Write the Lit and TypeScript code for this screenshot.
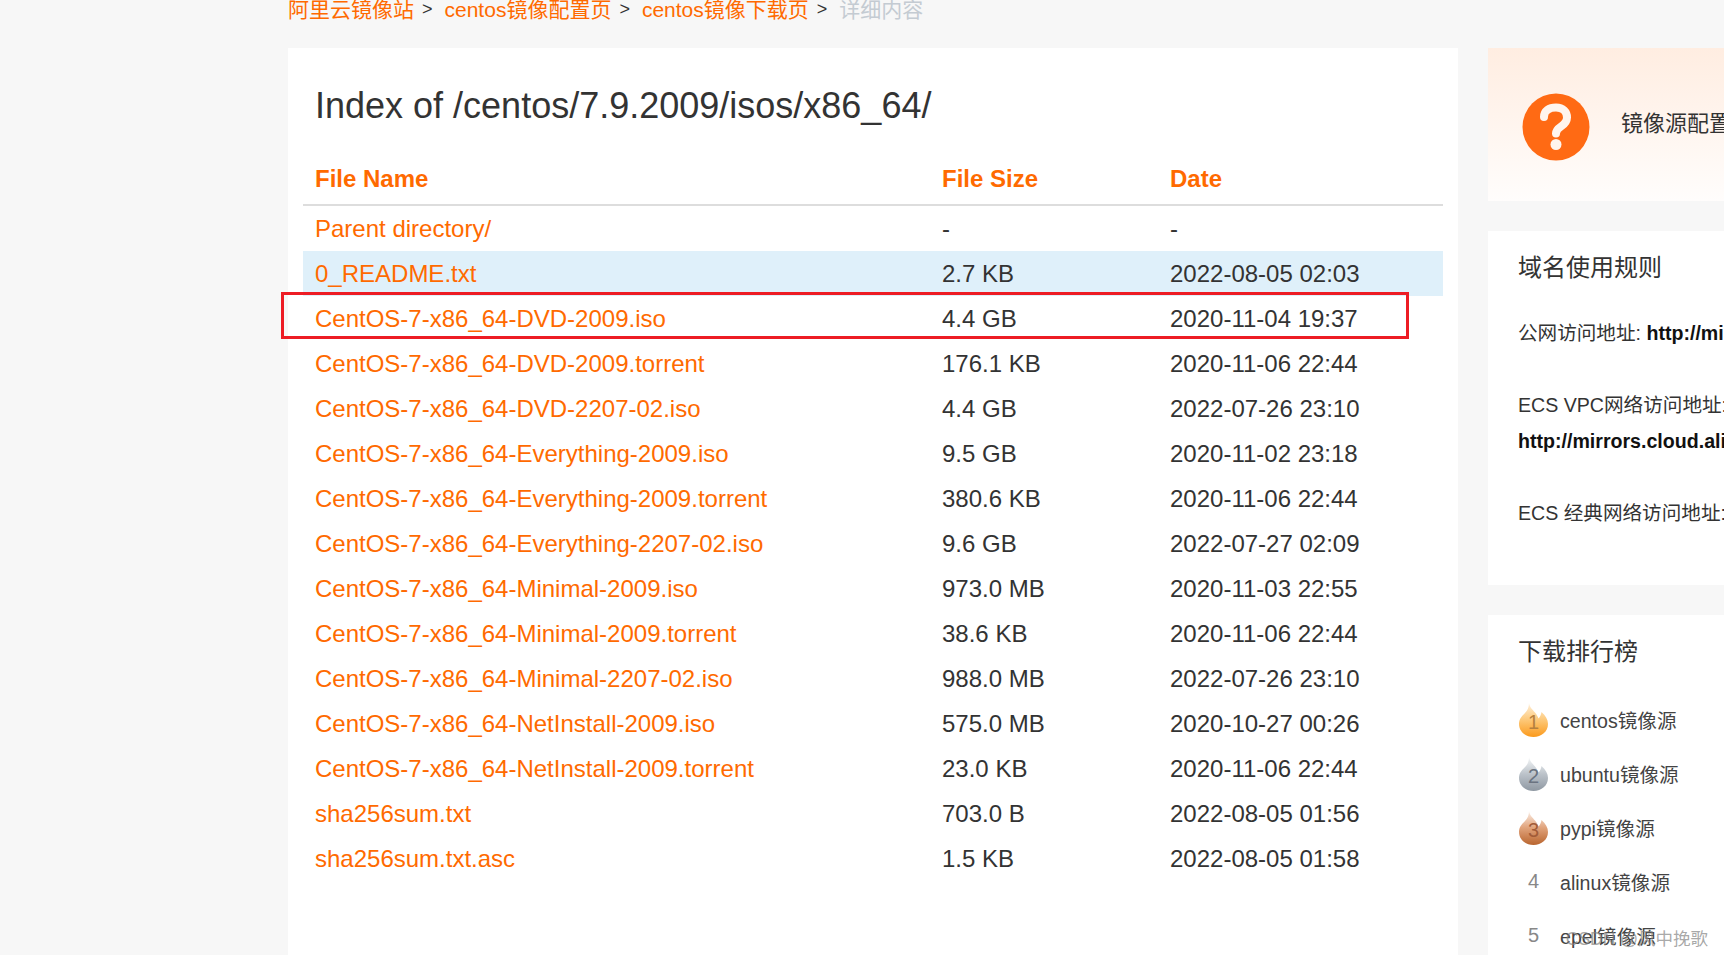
import { LitElement, html, css, svg } from "lit";
import { customElement } from "lit/decorators.js";

const FILES: [string, string, string][] = [
  ["Parent directory/", "-", "-"],
  ["0_README.txt", "2.7 KB", "2022-08-05 02:03"],
  ["CentOS-7-x86_64-DVD-2009.iso", "4.4 GB", "2020-11-04 19:37"],
  ["CentOS-7-x86_64-DVD-2009.torrent", "176.1 KB", "2020-11-06 22:44"],
  ["CentOS-7-x86_64-DVD-2207-02.iso", "4.4 GB", "2022-07-26 23:10"],
  ["CentOS-7-x86_64-Everything-2009.iso", "9.5 GB", "2020-11-02 23:18"],
  ["CentOS-7-x86_64-Everything-2009.torrent", "380.6 KB", "2020-11-06 22:44"],
  ["CentOS-7-x86_64-Everything-2207-02.iso", "9.6 GB", "2022-07-27 02:09"],
  ["CentOS-7-x86_64-Minimal-2009.iso", "973.0 MB", "2020-11-03 22:55"],
  ["CentOS-7-x86_64-Minimal-2009.torrent", "38.6 KB", "2020-11-06 22:44"],
  ["CentOS-7-x86_64-Minimal-2207-02.iso", "988.0 MB", "2022-07-26 23:10"],
  ["CentOS-7-x86_64-NetInstall-2009.iso", "575.0 MB", "2020-10-27 00:26"],
  ["CentOS-7-x86_64-NetInstall-2009.torrent", "23.0 KB", "2020-11-06 22:44"],
  ["sha256sum.txt", "703.0 B", "2022-08-05 01:56"],
  ["sha256sum.txt.asc", "1.5 KB", "2022-08-05 01:58"],
];

const RANKS = ["centos镜像源", "ubuntu镜像源", "pypi镜像源", "alinux镜像源", "epel镜像源"];
const FLAME = [
  ["#fff1dc", "#fdc878", "#fb9a1c"],
  ["#f6f8f9", "#bcc3ca", "#8f98a2"],
  ["#fcefe6", "#e0a27a", "#b9652f"],
];

function flame(i: number) {
  const [a, m, b] = FLAME[i];
  return svg`<svg class="flame" viewBox="0 0 29 34" width="29" height="34">
    <defs><linearGradient id="fl${i}" x1="0" y1="0" x2="0" y2="1">
      <stop offset="0" stop-color=${a}></stop><stop offset="0.5" stop-color=${m}></stop><stop offset="1" stop-color=${b}></stop>
    </linearGradient></defs>
    <path fill="url(#fl${i})" d="M10 0C10.500 4 13.500 6.500 16 9.500 18 12 19 14 19.500 15.500 21 14 22 12 22.500 9 26.500 12.500 29 16.500 29 21 29 28.500 22.500 34 14.500 34 6.500 34 0 28.500 0 21 0 16 3 13 6 10 8.500 7.500 10 4.500 10 0Z"></path>
  </svg>`;
}

@customElement("app-root")
export class AppRoot extends LitElement {
  static styles = css`
    :host {
      display: block;
      width: 1724px;
      height: 955px;
      overflow: hidden;
      position: relative;
      background: #f7f7f7;
      color: #333;
      font-family: "Liberation Sans", "Noto Sans CJK SC", Arial, sans-serif;
    }
    .crumbs {
      display: flex;
      align-items: center;
      height: 48px;
      margin: -16px 0 16px 288px;
      font-size: 21px;
      white-space: nowrap;
    }
    .crumbs a { color: #ff6a00; }
    .crumbs .sep { margin: 0 12px 0 8px; padding-top: 2px; color: #333; font-size: 18px; }
    .crumbs .now { color: #c4cbd2; }
    .cols {
      display: flex;
      gap: 30px;
      padding-left: 288px;
    }
    .main {
      flex: none;
      width: 1170px;
      height: 920px;
      background: #fff;
      padding: 36px 15px 0;
      box-sizing: border-box;
      position: relative;
    }
    h1 {
      margin: 0 0 0 12px;
      font-weight: 400;
      font-size: 36px;
      line-height: 44px;
      color: #333;
    }
    .row {
      display: grid;
      grid-template-columns: 627px 228px 285px;
      height: 45px;
      box-sizing: border-box;
      padding-top: 1px;
      align-items: center;
      font-size: 24px;
      white-space: nowrap;
    }
    .row > * { padding-left: 12px; }
    .row a { color: #ff6a00; }
    .row.odd { background: #dff0fa; }
    .row.head {
      height: 78px;
      padding-top: 26px;
      border-bottom: 2px solid #ddd;
      color: #ff6a00;
      font-weight: 700;
    }
    .mark {
      position: absolute;
      left: -7px;
      top: 244px;
      width: 1128px;
      height: 47px;
      box-sizing: border-box;
      border: 3px solid #ed1c24;
    }
    .side {
      flex: none;
      width: 360px;
      display: flex;
      flex-direction: column;
      gap: 30px;
    }
    .help {
      height: 153px;
      box-sizing: border-box;
      padding: 4px 0 0 34px;
      background: linear-gradient(#ffede1, #fffdfc);
      display: flex;
      align-items: center;
      gap: 31px;
      font-size: 22px;
      white-space: nowrap;
    }
    .help span { margin-top: -12px; }
    .card {
      background: #fff;
      padding: 0 30px;
      white-space: nowrap;
    }
    .card.rules { height: 354px; box-sizing: border-box; padding-top: 21px; font-size: 19.6px; }
    h2 {
      margin: 0;
      font-size: 24px;
      font-weight: 400;
      line-height: 32px;
      color: #333;
    }
    .rules p { margin: 0; line-height: 36px; }
    .rules h2 { margin-bottom: 31px; }
    .rules p + p { margin-top: 36px; }
    .rules b { color: #111; }
    .card.rank { padding-top: 21px; height: 400px; box-sizing: border-box; }
    .rank h2 { margin-bottom: 24.5px; }
    .item {
      display: flex;
      align-items: center;
      height: 54px;
      font-size: 19.6px;
      color: #444;
    }
    .badge {
      flex: none;
      width: 29px;
      height: 34px;
      margin: 0 12px 0 1px;
      position: relative;
      display: flex;
      align-items: center;
      justify-content: center;
      font-size: 20px;
      color: #888;
    }
    .flame { position: absolute; left: 0; top: 0; }
    .badge b { position: relative; font-weight: 400; padding-top: 5px; }
    .d0 { color: #b5803f; }
    .d1 { color: #6a7380; }
    .d2 { color: #a25c38; }
    .wm {
      position: absolute;
      right: 16px;
      bottom: 2px;
      font-size: 17.5px;
      line-height: 28px;
      color: rgba(130, 130, 130, 0.7);
      white-space: nowrap;
    }
  `;

  render() {
    return html`
      <nav class="crumbs">
        <a>阿里云镜像站</a><span class="sep">&gt;</span>
        <a>centos镜像配置页</a><span class="sep">&gt;</span>
        <a>centos镜像下载页</a><span class="sep">&gt;</span>
        <span class="now">详细内容</span>
      </nav>
      <div class="cols">
        <section class="main">
          <h1>Index of /centos/7.9.2009/isos/x86_64/</h1>
          <div class="row head"><span>File Name</span><span>File Size</span><span>Date</span></div>
          ${FILES.map(
            (f, i) => html`<div class="row ${i === 1 ? "odd" : ""}">
              <a>${f[0]}</a><span>${f[1]}</span><span>${f[2]}</span>
            </div>`
          )}
          <div class="mark"></div>
        </section>
        <aside class="side">
          <div class="help">
            <svg width="68" height="68" viewBox="0 0 68 68">
              <circle cx="34" cy="34" r="33.5" fill="#ff6a14"></circle>
              <path d="M22 24C22 18 27 14.500 34 14.500 41 14.500 45 19 45 24.500 45 29 42 31.500 39 33.500 36 35.500 34 37 34 40.500" fill="none" stroke="#fff5ee" stroke-width="8" stroke-linecap="round" stroke-linejoin="round"></path>
              <circle cx="34" cy="51.500" r="5.500" fill="#fff5ee"></circle>
            </svg>
            <span>镜像源配置</span>
          </div>
          <div class="card rules">
            <h2>域名使用规则</h2>
            <p>公网访问地址: <b>http://mirrors.aliyun.com/</b></p>
            <p>ECS VPC网络访问地址:<br /><b>http://mirrors.cloud.aliyuncs.com/</b></p>
            <p>ECS 经典网络访问地址:</p>
          </div>
          <div class="card rank">
            <h2>下载排行榜</h2>
            ${RANKS.map(
              (r, i) => html`<div class="item">
                <span class="badge">${i < 3 ? flame(i) : ""}${i < 3 ? html`<b class="d${i}">${i + 1}</b>` : html`${i + 1}`}</span>
                ${r}
              </div>`
            )}
          </div>
        </aside>
      </div>
      <div class="wm">CSDN @风中挽歌</div>
    `;
  }
}
